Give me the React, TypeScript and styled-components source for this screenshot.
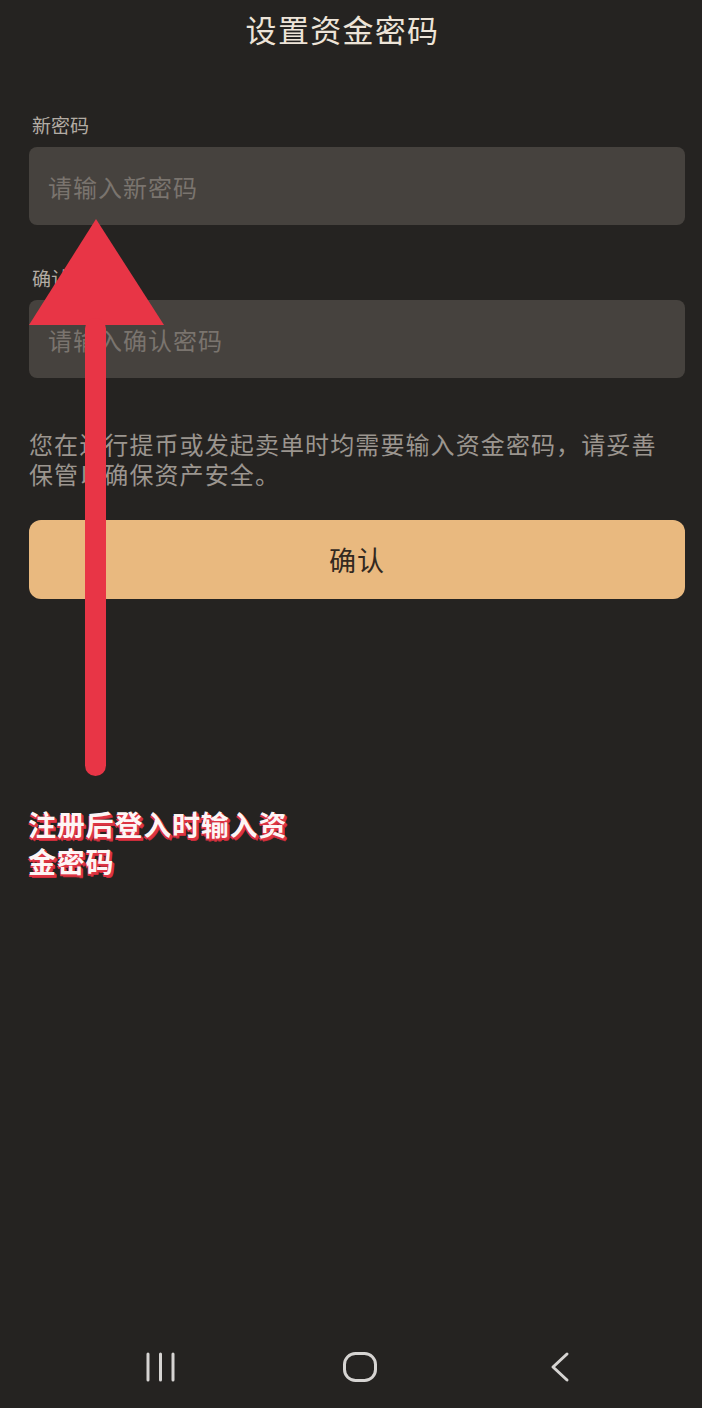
import React from "react";
import styled, { createGlobalStyle } from "styled-components";

const GlobalStyle = createGlobalStyle`
  html, body {
    margin: 0;
    padding: 0;
    background: #252321;
  }
  body {
    font-family: "Noto Sans CJK SC", "Noto Sans", sans-serif;
  }
  * { box-sizing: border-box; }
`;

const Page = styled.div`
  position: relative;
  min-height: 100vh;
  display: flex;
  flex-direction: column;
  background: #252321;
  overflow: hidden;
`;

const Header = styled.header`
  height: 60px;
  display: flex;
  align-items: center;
  justify-content: center;
  padding-right: 17px;
  padding-bottom: 2px;
`;

const Title = styled.h1`
  margin: 0;
  font-size: 31px;
  font-weight: 400;
  letter-spacing: 1.3px;
  color: #ede4d8;
  line-height: 40px;
`;

const Form = styled.div`
  display: flex;
  flex-direction: column;
  padding: 51px 17px 0 29px;
`;

const Field = styled.div<{ $gap?: number }>`
  display: flex;
  flex-direction: column;
  margin-top: ${(p) => p.$gap ?? 0}px;
`;

const Label = styled.label`
  font-size: 19px;
  line-height: 28px;
  color: #b3aca4;
  padding-left: 3px;
  margin-bottom: 8px;
`;

const Input = styled.input`
  height: 78px;
  width: 100%;
  border: none;
  outline: none;
  border-radius: 8px;
  background: #46423e;
  padding: 0 0 0 19px;
  font-family: "Noto Sans CJK SC", sans-serif;
  font-size: 24px;
  letter-spacing: 1px;
  color: #d8d2ca;
  &::placeholder {
    color: #7a746e;
  }
`;

const Notice = styled.p`
  margin: 51px 0 0 0;
  font-size: 24px;
  line-height: 30px;
  letter-spacing: 1.1px;
  color: #9b958f;
  padding-right: 6px;
`;

const ConfirmButton = styled.button`
  margin-top: 31px;
  height: 79px;
  width: 100%;
  border: none;
  border-radius: 12px;
  background: #e9b97f;
  color: #33291f;
  font-family: "Noto Sans CJK SC", sans-serif;
  font-size: 27px;
  letter-spacing: 1px;
  cursor: pointer;
`;

const Annotation = styled.div`
  margin: 207px 0 0 28px;
  width: 270px;
  font-size: 28px;
  font-weight: 700;
  line-height: 37px;
  color: #fdf5f5;
  letter-spacing: 0.8px;
  text-shadow: 1px 1px 0 #dd3443, 2px 2px 0 #dd3443, 2px 3px 0 #c92c3a, -1px 2px 0 #dd3443;
`;

const NavBar = styled.nav`
  margin-top: auto;
  height: 82px;
  display: flex;
  align-items: center;
  justify-content: space-between;
  padding: 0 132px 1px 145px;
`;

const NavIcon = styled.svg`
  display: block;
  color: #d6d4d2;
`;

const ArrowOverlay = styled.svg`
  position: absolute;
  left: 0;
  top: 0;
  pointer-events: none;
`;

export default function App() {
  return (
    <Page>
      <GlobalStyle />
      <Header>
        <Title>设置资金密码</Title>
      </Header>
      <Form>
        <Field>
          <Label>新密码</Label>
          <Input type="password" placeholder="请输入新密码" />
        </Field>
        <Field $gap={39}>
          <Label>确认密码</Label>
          <Input type="password" placeholder="请输入确认密码" />
        </Field>
        <Notice>
          您在进行提币或发起卖单时均需要输入资金密码，请妥善保管以确保资产安全。
        </Notice>
        <ConfirmButton>确认</ConfirmButton>
      </Form>
      <Annotation>注册后登入时输入资金密码</Annotation>
      <NavBar>
        <NavIcon width="32" height="32" viewBox="0 0 32 32">
          <g stroke="currentColor" strokeWidth="3" strokeLinecap="round">
            <line x1="3" y1="3" x2="3" y2="29" />
            <line x1="15.5" y1="3" x2="15.5" y2="29" />
            <line x1="28" y1="3" x2="28" y2="29" />
          </g>
        </NavIcon>
        <NavIcon width="34" height="32" viewBox="0 0 34 32">
          <rect x="1.5" y="2.5" width="31" height="27" rx="11" fill="none" stroke="currentColor" strokeWidth="3" />
        </NavIcon>
        <NavIcon width="27" height="32" viewBox="0 0 27 32">
          <polyline points="24,3 10,16 24,29" fill="none" stroke="currentColor" strokeWidth="3" strokeLinecap="round" strokeLinejoin="round" />
        </NavIcon>
      </NavBar>
      <ArrowOverlay width="200" height="800" viewBox="0 0 200 800">
        <polygon points="96,219 29,325 164,325" fill="#e83546" />
        <rect x="85" y="318" width="21" height="458" rx="10.5" fill="#e83546" />
      </ArrowOverlay>
    </Page>
  );
}
